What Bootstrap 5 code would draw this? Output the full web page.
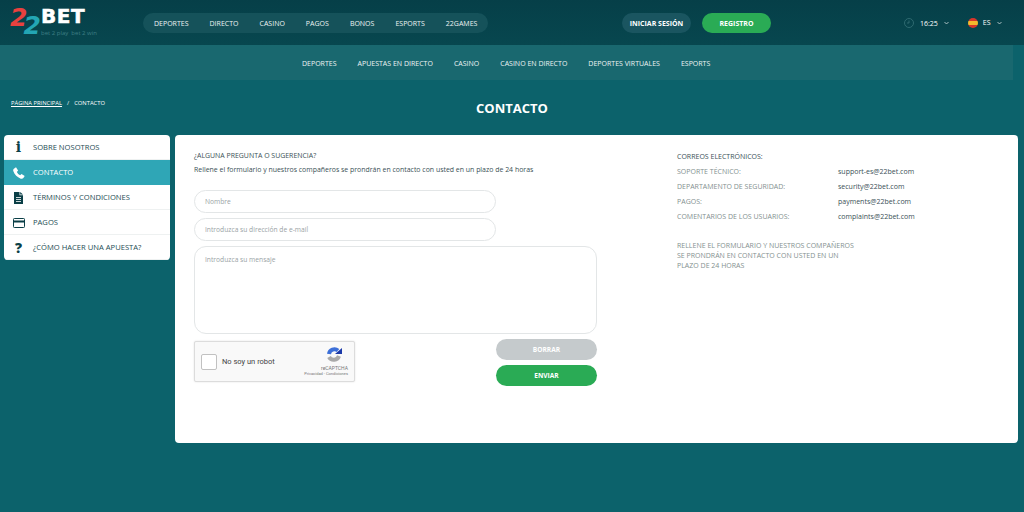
<!DOCTYPE html>
<html lang="es">
<head>
    <meta charset="UTF-8">
    <title>Contacto</title>
    <link href="https://cdn.jsdelivr.net/npm/bootstrap@5.3.3/dist/css/bootstrap.min.css" rel="stylesheet">
    <script src="https://cdn.jsdelivr.net/npm/bootstrap@5.3.3/dist/js/bootstrap.bundle.min.js"></script>
    <style>
        body {
            background: #0c626b;
            font-family: "Open Sans", "Liberation Sans", sans-serif;
            font-size: 7px;
            color: #fff;
            height: 512px;
            overflow: hidden;
        }

        .top-bar {
            height: 45px;
            background: linear-gradient(#063f48, #07474f);
            padding-left: 10px;
        }

        .logo-box {
            width: 133px;
            flex: none;
        }

        .logo-nums {
            font: italic 700 25px/25px "DejaVu Sans", sans-serif;
            letter-spacing: -4.500px;
            width: 31px;
            height: 28px;
            flex: none;
            position: relative;
        }

        .logo-red {
            color: #e8413f;
            position: absolute;
            left: 0;
            top: -4px;
        }

        .logo-teal {
            color: #23a6b4;
            position: absolute;
            left: 13.500px;
            top: 4px;
        }

        .logo-bet {
            font: 700 20px/15px "DejaVu Sans", sans-serif;
            -webkit-text-stroke: .5px #fff;
            letter-spacing: .5px;
        }

        .logo-sub {
            font-size: 6px;
            line-height: 8px;
            color: #3f7f85;
            margin-top: 5px;
            white-space: nowrap;
        }

        .main-menu {
            height: 20px;
            background: #15525a;
            border-radius: 10px;
            padding: 3px 11px 0;
            gap: 21px;
            width: 345px;
            flex: none;
            color: #eef4f4;
        }

        .btn-login, .btn-reg {
            height: 20px;
            border-radius: 10px;
            font-weight: 700;
            padding-top: 3px;
        }

        .btn-login {
            width: 69px;
            background: #1a5560;
            margin-left: 134px;
        }

        .btn-reg {
            width: 69px;
            background: #2aab55;
            margin-left: 11px;
        }

        .clock-icon {
            margin-left: 133px;
        }

        .time-text {
            margin-left: 6px;
            padding-top: 3px;
        }

        .small-chev {
            margin-left: 6px;
        }

        .flag-icon {
            width: 10px;
            height: 10px;
            border-radius: 50%;
            background: linear-gradient(#d8352a 28%, #f4b82d 28%, #f4b82d 72%, #d8352a 72%);
            margin-left: 19px;
        }

        .lang-text {
            margin-left: 5px;
            padding-top: 2px;
        }

        .sub-bar {
            height: 35px;
            width: 1013px;
            background: #19686f;
            gap: 21px;
            padding: 3px 0 0 302px;
            color: #eef4f4;
        }

        .title-row {
            height: 55px;
        }

        .crumbs {
            font-size: 5.800px;
            padding-left: 11px;
            padding-top: 19px;
            width: 476px;
            flex: none;
        }

        .crumbs a {
            color: #fff;
        }

        .crumb-sep {
            margin: 0 5px;
        }

        .page-title {
            font-size: 13px;
            font-weight: 700;
            padding-top: 19px;
            line-height: 18px;
        }

        .content-row {
            padding-left: 4px;
            gap: 5px;
        }

        .side-menu {
            width: 166px;
            height: 125px;
            border-radius: 4px;
            overflow: hidden;
            background: #fff;
            flex: none;
        }

        .side-item {
            height: 25px;
            color: #1d4c54;
            border-bottom: 1px solid #eef1f1;
            font-size: 7.600px;
            padding-top: 1px;
        }

        .side-item.current {
            background: #2fa6b6;
            color: #fff;
            border: 0;
        }

        .side-ico {
            width: 29px;
            flex: none;
            justify-content: center;
            font-weight: 800;
            font-size: 14px;
            color: #0b3f47;
        }

        .ico-i {
            font-family: "DejaVu Serif", serif;
            font-weight: 700;
        }

        .main-card {
            width: 843px;
            height: 308px;
            background: #fff;
            border-radius: 4px;
            padding: 14px 0 0 19px;
            color: #3a5056;
            flex: none;
        }

        .form-col {
            width: 483px;
            flex: none;
        }

        .intro-line {
            font-size: 6.950px;
            line-height: 13.500px;
        }

        .intro-text {
            margin-bottom: 14px;
        }

        .field-box {
            width: 302px;
            height: 23px;
            border: 1px solid #e3e6e7;
            border-radius: 12px;
            padding: 0 10px;
            font-size: 6.700px;
            box-shadow: none;
            margin-bottom: 5px;
            display: block;
        }

        .field-box::placeholder {
            color: #9aa3a5;
        }

        .field-area {
            width: 403px;
            height: 88px;
            border-radius: 12px;
            padding-top: 8px;
            margin-bottom: 0;
            resize: none;
        }

        .form-bottom {
            width: 403px;
            margin-top: 5px;
        }

        .captcha-box {
            width: 161px;
            height: 41px;
            margin-top: 2px;
            background: #f9f9f9;
            border: 1px solid #dcdcdc;
            border-radius: 2px;
            box-shadow: 0 0 2px rgba(0, 0, 0, .12);
            font-family: Roboto, sans-serif;
            font-size: 7.500px;
            color: #444;
            padding-left: 6px;
        }

        .captcha-check {
            width: 16px;
            height: 16px;
            background: #fff;
            border: 1px solid #c1c1c1;
            border-radius: 2px;
            margin-right: 5px;
        }

        .captcha-side {
            width: 50px;
            margin-left: auto;
            margin-right: 6px;
            color: #777;
            font-size: 5px;
            line-height: 6.500px;
            text-align: right;
        }

        .captcha-side svg {
            display: block;
            margin: 0 5px 1px auto;
        }

        .captcha-side small {
            font-size: 4px;
            display: block;
            white-space: nowrap;
        }

        .action-btns {
            width: 101px;
            gap: 5px;
        }

        .act-btn {
            height: 21px;
            border-radius: 11px;
            font-weight: 700;
            font-size: 6.600px;
            color: #fff;
            width: 100%;
        }

        .act-clear {
            background: #c5cacc;
        }

        .act-send {
            background: #2aab55;
        }

        .info-col {
            width: 290px;
            flex: none;
        }

        .mail-row {
            height: 15px;
            line-height: 15px;
            color: #84908f;
        }

        .mail-row span:first-child {
            width: 161px;
        }

        .mail-row span:last-child {
            color: #3a5056;
        }

        .mail-head {
            color: #3a5056;
        }

        .info-note {
            margin-top: 17px;
            width: 180px;
            line-height: 10px;
            color: #84908f;
        }
    </style>
</head>

<body>

    <div class="top-bar d-flex align-items-center">
        <div class="logo-box d-flex align-items-center">
            <div class="logo-nums"><span class="logo-red">2</span><span class="logo-teal">2</span></div>
            <div>
                <div class="logo-bet">BET</div>
                <div class="logo-sub">bet 2 play &nbsp;bet 2 win</div>
            </div>
        </div>
        <div class="main-menu d-flex align-items-center">
            <span>DEPORTES</span><span>DIRECTO</span><span>CASINO</span><span>PAGOS</span><span>BONOS</span><span>ESPORTS</span><span>22GAMES</span>
        </div>
        <div class="btn-login d-flex align-items-center justify-content-center">INICIAR SESIÓN</div>
        <div class="btn-reg d-flex align-items-center justify-content-center">REGISTRO</div>
        <svg class="clock-icon" width="10" height="10" viewBox="0 0 10 10" fill="none" stroke="#3f7a7f" stroke-width=".7">
            <circle cx="5" cy="5" r="4.500"/>
            <path d="M5 2.500V5H3"/>
        </svg>
        <span class="time-text">16:25</span>
        <svg class="small-chev" width="5" height="4" viewBox="0 0 5 4" fill="none" stroke="#cfdcdd" stroke-width=".8"><path d="M.5 1l2 2 2-2"/></svg>
        <div class="flag-icon"></div>
        <span class="lang-text">ES</span>
        <svg class="small-chev" width="5" height="4" viewBox="0 0 5 4" fill="none" stroke="#cfdcdd" stroke-width=".8"><path d="M.5 1l2 2 2-2"/></svg>
    </div>

    <div class="sub-bar d-flex align-items-center">
        <span>DEPORTES</span><span>APUESTAS EN DIRECTO</span><span>CASINO</span><span>CASINO EN DIRECTO</span><span>DEPORTES VIRTUALES</span><span>ESPORTS</span>
    </div>

    <div class="title-row d-flex">
        <div class="crumbs"><a href="#">PÁGINA PRINCIPAL</a><span class="crumb-sep">/</span>CONTACTO</div>
        <div class="page-title">CONTACTO</div>
    </div>

    <div class="content-row d-flex align-items-start">
        <div class="side-menu">
            <div class="side-item d-flex align-items-center">
                <div class="side-ico ico-i d-flex">i</div>SOBRE NOSOTROS
            </div>
            <div class="side-item current d-flex align-items-center">
                <div class="side-ico d-flex">
                    <svg width="12" height="12" viewBox="0 0 16 16" fill="#fff"><path d="M4 .4 1.200 2.200C.2 3 0 4.300.5 5.700c1.700 4.600 5.100 8 9.800 9.800 1.400.5 2.700.3 3.500-.7l1.800-2.800-4.200-2.800-2 1.700c-1.900-1-3.300-2.500-4.300-4.400l1.700-2z"/></svg>
                </div>CONTACTO
            </div>
            <div class="side-item d-flex align-items-center">
                <div class="side-ico d-flex">
                    <svg width="9" height="12" viewBox="0 0 9 12" fill="#0b3f47"><path d="M0 0h5.500v3.300H9V12H0z"/><path d="M6.200 0 9 2.600H6.200z"/><path d="M2 5.500h5M2 7.500h5M2 9.500h5" stroke="#fff" stroke-width=".8"/></svg>
                </div>TÉRMINOS Y CONDICIONES
            </div>
            <div class="side-item d-flex align-items-center">
                <div class="side-ico d-flex">
                    <svg width="12" height="10" viewBox="0 0 12 10" fill="none" stroke="#0b3f47"><rect x=".5" y=".5" width="11" height="9" rx=".8"/><path d="M0 3.400h12" stroke-width="2"/></svg>
                </div>PAGOS
            </div>
            <div class="side-item d-flex align-items-center">
                <div class="side-ico d-flex">?</div>¿CÓMO HACER UNA APUESTA?
            </div>
        </div>

        <div class="main-card d-flex">
            <div class="form-col">
                <div class="intro-line">¿ALGUNA PREGUNTA O SUGERENCIA?</div>
                <div class="intro-line intro-text">Rellene el formulario y nuestros compañeros se prondrán en contacto con usted en un plazo de 24 horas</div>
                <input class="field-box form-control" placeholder="Nombre">
                <input class="field-box form-control" placeholder="Introduzca su dirección de e-mail">
                <textarea class="field-box field-area form-control" placeholder="Introduzca su mensaje"></textarea>
                <div class="form-bottom d-flex justify-content-between align-items-start">
                    <div class="captcha-box d-flex align-items-center">
                        <div class="captcha-check"></div>
                        <span>No soy un robot</span>
                        <div class="captcha-side">
                            <svg width="18" height="18" viewBox="0 0 18 18" fill="none" stroke-width="4">
                                <path d="M4 8a5.500 5.500 0 0 1 9-3.500" stroke="#3c6fd8"/>
                                <path d="M14 10a5.500 5.500 0 0 1-10 1" stroke="#a9a9a9"/>
                                <path d="M10 8l7-6v6z" fill="#1c3aa9" stroke="none"/>
                            </svg>
                            <div>reCAPTCHA</div>
                            <small>Privacidad - Condiciones</small>
                        </div>
                    </div>
                    <div class="action-btns d-flex flex-column">
                        <div class="act-btn act-clear d-flex align-items-center justify-content-center">BORRAR</div>
                        <div class="act-btn act-send d-flex align-items-center justify-content-center">ENVIAR</div>
                    </div>
                </div>
            </div>
            <div class="info-col">
                <div class="mail-row mail-head d-flex"><span>CORREOS ELECTRÓNICOS:</span></div>
                <div class="mail-row d-flex"><span>SOPORTE TÉCNICO:</span><span>support-es@22bet.com</span></div>
                <div class="mail-row d-flex"><span>DEPARTAMENTO DE SEGURIDAD:</span><span>security@22bet.com</span></div>
                <div class="mail-row d-flex"><span>PAGOS:</span><span>payments@22bet.com</span></div>
                <div class="mail-row d-flex"><span>COMENTARIOS DE LOS USUARIOS:</span><span>complaints@22bet.com</span></div>
                <div class="info-note">RELLENE EL FORMULARIO Y NUESTROS COMPAÑEROS SE PRONDRÁN EN CONTACTO CON USTED EN UN PLAZO DE 24 HORAS</div>
            </div>
        </div>
    </div>

</body>

</html>
